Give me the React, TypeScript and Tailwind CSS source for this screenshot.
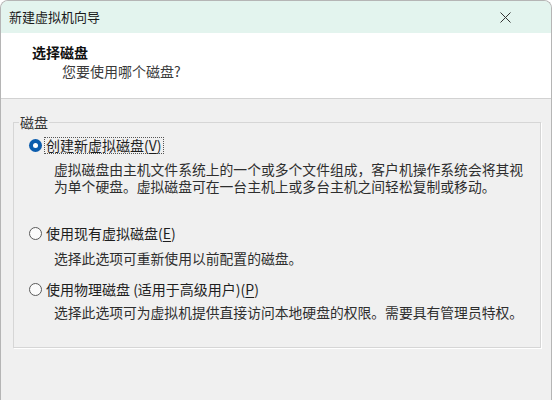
const cjk = { fontFamily: '"Noto Sans CJK SC", "Liberation Sans", sans-serif' };

const Radio = ({ checked }: { checked?: boolean }) =>
  checked ? (
    <span className="w-[13px] h-[13px] shrink-0 rounded-full bg-[#0b5cad] flex items-center justify-center">
      <span className="w-[5px] h-[5px] rounded-full bg-white" />
    </span>
  ) : (
    <span className="w-[13px] h-[13px] shrink-0 rounded-full border border-[#5a5a5a] bg-[#fbfbfb]" />
  );

const Option = ({
  label,
  accel,
  checked,
  className,
}: {
  label: string;
  accel: string;
  checked?: boolean;
  className?: string;
}) => (
  <div className={`flex items-center h-[16px] pl-[15px] ${className ?? ""}`}>
    <Radio checked={checked} />
    <span
      className={`ml-[2px] px-[1px] leading-[15px] text-[14px] text-[#1e1e1e] border border-dotted ${
        checked ? "border-[#555]" : "border-transparent"
      }`}
    >
      {label}(<span className="underline underline-offset-2">{accel}</span>)
    </span>
  </div>
);

const App = () => {
  return (
    <div
      className="w-[552px] h-[400px] overflow-hidden bg-[#f0f0f0] rounded-t-lg border border-b-0 border-[#b5b5b5]"
      style={cjk}
    >
      <div className="h-[32px] bg-[#e3f4ee] flex items-center justify-between pl-[8px] pr-[40px]">
        <span className="text-[13px] text-[#1a1a1a]">新建虚拟机向导</span>
        <svg width="11" height="11" viewBox="0 0 11 11">
          <path d="M0.5 0.5 L10.5 10.5 M10.5 0.5 L0.5 10.5" stroke="#333" strokeWidth="1" />
        </svg>
      </div>

      <div className="h-[66px] bg-white border-b border-[#d2d2d2] pl-[31px] pt-[10px] leading-[19px]">
        <div className="text-[14px] font-semibold text-[#111]">选择磁盘</div>
        <div className="pl-[30px] text-[14px] text-[#3a3a3a]">您要使用哪个磁盘?</div>
      </div>

      <fieldset className="mt-[15px] ml-[12px] w-[528px] border border-[#d6d6d6] shadow-[1px_1px_0_#fff] px-0 pb-[26px]">
        <legend className="ml-[5px] px-[1px] text-[14px] leading-[16px] text-[#333]">磁盘</legend>

        <Option className="mt-[7px]" label="创建新虚拟磁盘" accel="V" checked />
        <div className="mt-[8px] pl-[40px] text-[13.8px] leading-[17px] text-[#2e2e2e]">
          虚拟磁盘由主机文件系统上的一个或多个文件组成，客户机操作系统会将其视
          <br />
          为单个硬盘。虚拟磁盘可在一台主机上或多台主机之间轻松复制或移动。
        </div>

        <Option className="mt-[30px]" label="使用现有虚拟磁盘" accel="E" />
        <div className="mt-[9px] pl-[40px] text-[13.8px] leading-[17px] text-[#2e2e2e]">
          选择此选项可重新使用以前配置的磁盘。
        </div>

        <Option className="mt-[14px]" label="使用物理磁盘 (适用于高级用户)" accel="P" />
        <div className="mt-[7px] pl-[40px] text-[13.8px] leading-[17px] text-[#2e2e2e]">
          选择此选项可为虚拟机提供直接访问本地硬盘的权限。需要具有管理员特权。
        </div>
      </fieldset>
    </div>
  );
};

export default App;
